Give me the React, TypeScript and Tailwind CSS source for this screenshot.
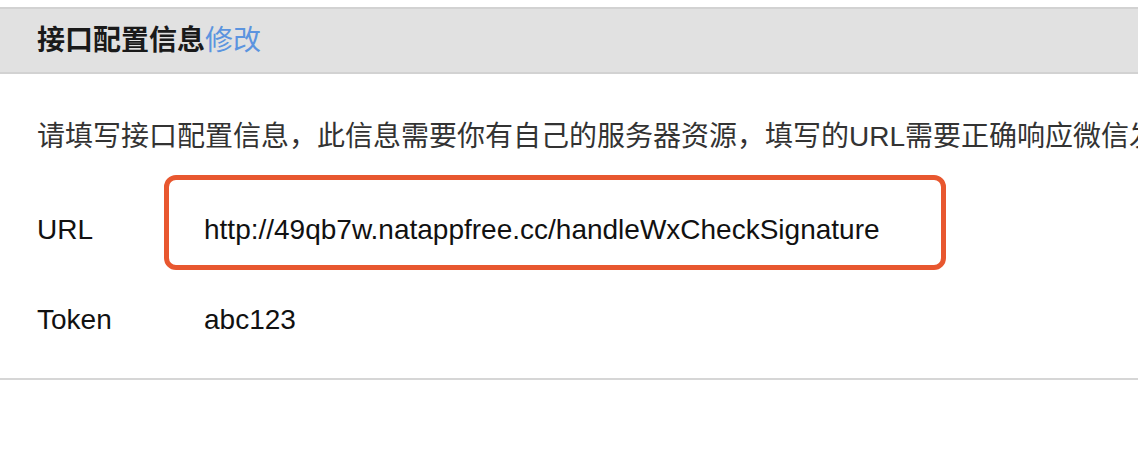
export default function App() {
  return (
    <div
      className="w-full h-[456px] bg-white overflow-hidden pt-[7px]"
      style={{ fontFamily: '"Liberation Sans", "Noto Sans CJK SC", sans-serif' }}
    >
      {/* 标题栏 */}
      <div className="h-[67px] border-y-2 border-[#d2d2d2] bg-[#e1e1e1] flex items-center pl-[37px]">
        <span className="text-[28px] font-bold text-[#1a1a1a] leading-none">接口配置信息</span>
        <span className="text-[28px] text-[#5b94df] leading-none">修改</span>
      </div>

      <div className="border-b-2 border-[#d6d6d6] pb-[13px]">
        <p className="mt-[43px] h-[40px] leading-[40px] pl-[37px] text-[28px] text-[#333] whitespace-nowrap overflow-hidden">
          请填写接口配置信息，此信息需要你有自己的服务器资源，填写的URL需要正确响应微信发送的Token验证
        </p>

        <div className="relative mt-[28px] h-[90px] flex items-center text-[28px] text-[#111]">
          <span className="w-[204px] pl-[37px] shrink-0">URL</span>
          <span>http://49qb7w.natappfree.cc/handleWxCheckSignature</span>
          <div className="absolute left-[164px] top-[-10px] w-[782px] h-[95px] border-[5px] border-[#e8572f] rounded-[12px]" />
        </div>

        <div className="h-[90px] flex items-center text-[28px] text-[#111]">
          <span className="w-[204px] pl-[37px] shrink-0">Token</span>
          <span>abc123</span>
        </div>
      </div>
    </div>
  );
}
